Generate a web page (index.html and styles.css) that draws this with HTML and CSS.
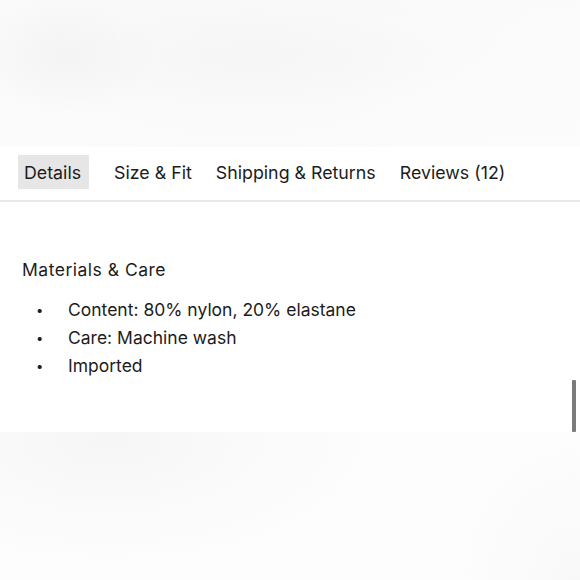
FILE: index.html
```html
<!DOCTYPE html>
<html>
<head>
<meta charset="utf-8">
<link rel="stylesheet" href="styles.css">
</head>
<body>
<div class="page">
  <div class="hero-blur"></div>
  <section class="panel">
    <nav class="tabs">
      <span class="tab active">Details</span>
      <span class="tab">Size &amp; Fit</span>
      <span class="tab">Shipping &amp; Returns</span>
      <span class="tab">Reviews (12)</span>
    </nav>
    <div class="content">
      <h3 class="heading">Materials &amp; Care</h3>
      <ul class="list">
        <li>Content: 80% nylon, 20% elastane</li>
        <li>Care: Machine wash</li>
        <li>Imported</li>
      </ul>
    </div>
  </section>
  <div class="foot-blur"></div>
  <div class="scrollbar"></div>
</div>
</body>
</html>
```

FILE: styles.css
```css
* { box-sizing: border-box; }
html, body { margin: 0; padding: 0; background: #ffffff; }
body { font-family: Inter, "Noto Sans", sans-serif; color: #1c1c1c; }
.page { position: relative; width: 580px; height: 580px; overflow: hidden; display: flex; flex-direction: column; }
.hero-blur {
  height: 147px;
  flex: none;
  background:
    radial-gradient(ellipse 90px 60px at 65px 55px, #f4f4f4 0%, rgba(245,245,245,0) 100%),
    radial-gradient(ellipse 200px 50px at 255px 57px, #f6f6f6 0%, rgba(247,247,247,0) 100%),
    radial-gradient(ellipse 320px 150px at 240px 50px, #f8f8f8 0%, rgba(250,250,250,0) 100%),
    linear-gradient(#fafafa, #fcfcfc);
}
.panel { flex: none; background: #fff; height: 285px; }
.tabs { display: flex; gap: 12px; padding: 8px 0 0 18px; height: 55px; border-bottom: 2px solid #e8e8e8; }
.tab { font-size: 17.8px; line-height: 34px; height: 34px; padding: 1px 6px 0; color: #1c1c1c; }
.tab.active { background: #e6e6e6; padding-right: 8px; margin-right: 7px; }
.content { padding: 57px 22px 0 22px; }
.heading { margin: 0; font-size: 17.5px; font-weight: 400; line-height: 22px; letter-spacing: 0.5px; }
.list { list-style: none; margin: 15px 0 0 0; padding: 0 0 0 14px; font-size: 17.5px; line-height: 28px; }
.list li { display: flex; }
.list li::before { content: "\2022"; width: 32px; font-size: 13px; flex: none; }
.foot-blur {
  flex: 1;
  background:
    radial-gradient(ellipse 260px 120px at 110px 10px, #f6f6f6 0%, rgba(248,248,248,0) 100%),
    radial-gradient(ellipse 120px 140px at 580px 150px, #f8f8f8 0%, rgba(250,250,250,0) 100%),
    #fdfdfd;
}
.scrollbar { position: absolute; left: 572px; top: 380px; width: 4px; height: 52px; background: #7b7b7b; border-radius: 1px; }
```
